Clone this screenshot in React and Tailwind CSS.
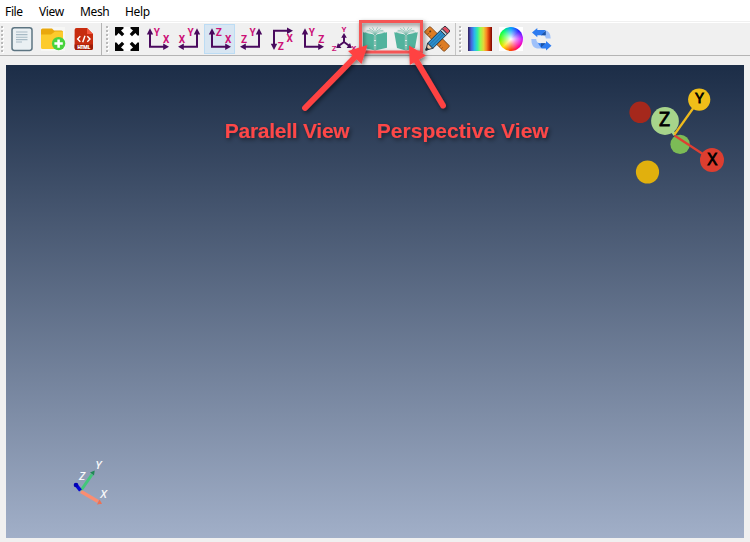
import React from 'react';

const PURPLE = '#4a0a5e';
const PINK = '#cc1177';

function Icon({ children }) {
  return <svg className="block h-6 w-6 overflow-visible" viewBox="0 0 24 24">{children}</svg>;
}

function ToolButton({ active, children }) {
  return (
    <div className={`flex h-[30px] w-[31px] items-center justify-center border ${active ? 'border-[#bcdcf4] bg-[#d8e6f2]' : 'border-transparent'}`}>
      {children}
    </div>
  );
}

function Handle() {
  return (
    <div className="flex w-[3px] flex-col gap-[2px]">
      {Array.from({ length: 7 }, (_, i) => (
        <div key={i} className="h-[2px] w-[2px] bg-[#b9b9b9] shadow-[1px_1px_0_#ffffff]" />
      ))}
    </div>
  );
}

function Letter({ x, y, size = 10, children }) {
  return (
    <text x={x} y={y} textAnchor="middle" fontFamily="Roboto, 'Open Sans', sans-serif" fontWeight="700" fontSize={size} fill={PINK}>
      {children}
    </text>
  );
}

// Two-axis view icon: corner on the left, on the right, or at the top.
function AxisIcon({ corner, a, b }) {
  if (corner === 'top') {
    return (
      <Icon>
        <path d="M4 18V3.7H18" fill="none" stroke={PURPLE} strokeWidth="2" />
        <path d="M.8 16.8H7.2L4 23ZM17 .5V6.9L23 3.7Z" fill={PURPLE} />
        <Letter x="19.7" y="15">{a}</Letter>
        <Letter x="10.8" y="23">{b}</Letter>
      </Icon>
    );
  }
  const right = corner === 'right';
  return (
    <Icon>
      <g transform={right ? 'translate(24 0) scale(-1 1)' : undefined}>
        <path d="M4 6V19.7H18" fill="none" stroke={PURPLE} strokeWidth="2" />
        <path d="M.8 7.4H7.2L4 1.3ZM17.2 16.5V22.9L23 19.7Z" fill={PURPLE} />
      </g>
      <Letter x={right ? 13.7 : 10.8} y="8.8">{a}</Letter>
      <Letter x={right ? 5 : 20.2} y="15.6">{b}</Letter>
    </Icon>
  );
}

function IsoIcon() {
  return (
    <Icon>
      <path d="M12 9V15L6.5 19M12 15L17.5 19" fill="none" stroke={PURPLE} strokeWidth="2" />
      <path d="M9.2 10.8H14.8L12 6ZM4.2 21L6 16L9.4 20.9ZM19.8 21L18 16L14.6 20.9Z" fill={PURPLE} />
      <Letter x="12" y="5.4" size={8}>Y</Letter>
      <Letter x="2.2" y="24" size={8}>Z</Letter>
      <Letter x="21.8" y="24" size={8}>X</Letter>
    </Icon>
  );
}

function DocumentIcon() {
  return (
    <Icon>
      <rect x="2" y=".7" width="20" height="22.8" rx="2.4" fill="#eaf0f3" stroke="#5d7582" strokeWidth="1.5" />
      <path d="M6 5H17.5M6 7.6H17.5M6 10.2H17.5M6 12.6H17.5M6 15H12" stroke="#a7bac5" strokeWidth="1.1" />
    </Icon>
  );
}

function FolderIcon() {
  return (
    <Icon>
      <rect width="24" height="24" fill="#f7f7f5" />
      <path d="M0 3Q0 1.5 1.5 1.5H11L13 3.5H20.5Q22 3.5 22 5V19H0Z" fill="#e9a80e" />
      <path d="M0 7.5H10L14 4.5H22V20.5Q22 22 20.5 22H1.5Q0 22 0 20.5Z" fill="#fccb2d" />
      <circle cx="17.6" cy="16.6" r="6.7" fill="#49d33e" />
      <path d="M17.6 12.4V20.8M13.4 16.6H21.8" stroke="#fff" strokeWidth="2.5" />
    </Icon>
  );
}

function HtmlIcon() {
  return (
    <Icon>
      <path d="M4.5 1H15L21 7V21Q21 23 19 23H4.5Q2.6 23 2.6 21V3Q2.6 1 4.5 1Z" fill="#c72c0f" />
      <path d="M15 1V7H21Z" fill="#f3543a" />
      <path d="M2.6 17.5H21V21Q21 23 19 23H4.5Q2.6 23 2.6 21Z" fill="#9f1c08" />
      <path d="M8.3 9.2L5.6 12L8.3 14.8M15.3 9.2L18 12L15.3 14.8M13 8.7L10.7 15.3" fill="none" stroke="#fff" strokeWidth="1.4" />
      <text x="11.8" y="22.1" textAnchor="middle" fontFamily="'Open Sans', sans-serif" fontWeight="800" fontSize="5" fill="#fff" textLength="13">HTML</text>
    </Icon>
  );
}

function ExpandIcon() {
  return (
    <Icon>
      <rect width="24" height="24" fill="#fff" />
      {[0, 90, 180, 270].map((r) => (
        <g key={r} transform={`rotate(${r} 12 12)`}>
          <path d="M0 0H8.5V1.5L6 3.6L9.3 7L7 9.3L3.6 6L1.5 8.5H0Z" fill="#050505" />
        </g>
      ))}
    </Icon>
  );
}

function BookIcon({ perspective }) {
  return (
    <Icon>
      <path d="M2 5.5Q8.5 3.2 11.8 8M22 5.5Q15.5 3.2 12.2 8M3.6 3.4Q9.6 2.8 11.9 8M20.4 3.4Q14.4 2.8 12.1 8M6 1.4Q11 3 12 8M18 1.4Q13 3 12 8M9.4 .4Q11.6 3 12 8M14.6 .4Q12.4 3 12 8" fill="none" stroke="#6db5a5" strokeWidth=".6" />
      <path
        d={perspective ? 'M.2 5.2L9.8 7.2L12 8.8L14.2 7.2L23.8 5.2L21 21L14 23L12 23.6L10 23L3 21Z' : 'M0 5.2L9.8 7.2L12 8.8L14.2 7.2L24 5.2V20.8L14 23L12 23.6L10 23L0 20.8Z'}
        fill="#51b39d"
      />
      <path d="M12 8.8V23.2" stroke="#d6ebe5" strokeWidth="2.2" />
      <path d="M12 8.8V23.2" stroke="#4a9a87" strokeWidth="1.1" strokeDasharray="4.2 .9" />
    </Icon>
  );
}

function PencilRulerIcon() {
  return (
    <Icon>
      <g transform="rotate(45 12 12)">
        <rect x="-2" y="8" width="28" height="8" rx="1" fill="#dd7d25" stroke="#7d4a20" strokeWidth=".8" />
        <path d="M2 16V13M5 16V14M19 16V13M22 16V14" stroke="#8d4d1a" strokeWidth=".9" />
        <circle cx="1.8" cy="11.4" r="1" fill="#623817" />
      </g>
      <g transform="rotate(-45 12 12)" stroke="#27323d" strokeWidth=".9">
        <path d="M-3.8 12L2.5 8.3V15.7Z" fill="#efd0ac" />
        <path d="M2.5 8.3H20.5V15.7H2.5Z" fill="#2d8ecb" />
        <path d="M3 10.8H20.5M3 13.2H20.5" stroke="#1b689c" strokeWidth=".7" />
        <path d="M20.5 8.3H23V15.7H20.5Z" fill="#b9cad4" />
        <path d="M23 8.3H25.5Q27 8.3 27 9.8V14.2Q27 15.7 25.5 15.7H23Z" fill="#df4d60" />
        <path d="M-3.8 12L-1.2 10.5V13.5Z" fill="#222b34" />
      </g>
    </Icon>
  );
}

function SyncIcon() {
  return (
    <Icon>
      <path d="M11 3H14.5Q20.7 4 20.7 11.6H15.8Q15.8 8.3 11 8.3Z" fill="#9fc1fa" />
      <path d="M2 5.6L7.3 1V3H15.5L12 8.3H7.3V10.2Z" fill="#2e7cf0" />
      <path d="M11 8.3L15.8 3.4V8.3Z" fill="#1d54a6" />
      <path d="M1.3 12H6.2Q6.2 16.2 11 16.2V21.4H7Q1.3 20.5 1.3 12Z" fill="#9fc1fa" />
      <path d="M21.5 18.8L16 14V16.2H8L11.5 21.4H16V23.4Z" fill="#2e7cf0" />
      <path d="M11 16.2H15.5L11 20.6Z" fill="#1d54a6" />
    </Icon>
  );
}

function Annotations() {
  return (
    <svg className="pointer-events-none absolute left-0 top-0" width="750" height="542" viewBox="0 0 750 542">
      <defs>
        <filter id="shadow" x="-20%" y="-20%" width="150%" height="150%">
          <feDropShadow dx="1.5" dy="2" stdDeviation="2" floodColor="#000" floodOpacity=".5" />
        </filter>
      </defs>
      <g filter="url(#shadow)">
        <rect x="360.5" y="21.5" width="61" height="30.5" fill="none" stroke="#f55555" strokeWidth="3" />
      </g>
      <g filter="url(#shadow)" fill="#ff4343" stroke="#ff4343">
        <path d="M305 108L356 56" strokeWidth="5.8" strokeLinecap="round" />
        <path d="M367.5 45L361.5 64L348 51Z" stroke="none" />
        <path d="M443 105.5L416 60" strokeWidth="5.8" strokeLinecap="round" />
        <path d="M409 45.5L426 55.5L409.8 65Z" stroke="none" />
      </g>
      <g filter="url(#shadow)" fill="#ff4747" fontFamily="'Liberation Sans', Arial, sans-serif" fontWeight="700" fontSize="21">
        <text x="224.7" y="138" textLength="125">Paralell View</text>
        <text x="376.7" y="138" textLength="172">Perspective View</text>
      </g>
    </svg>
  );
}

function OrientationWidget() {
  return (
    <svg className="absolute right-0 top-0" width="124" height="129" viewBox="620 65 124 129">
      <circle cx="640.2" cy="112.3" r="10.8" fill="#a5281c" />
      <circle cx="647.5" cy="172" r="11.6" fill="#e1b00d" />
      <circle cx="680.1" cy="144.4" r="9.7" fill="#7cbb56" />
      <path d="M675 135L667 124" stroke="#a5d58a" strokeWidth="3" />
      <path d="M674.5 134.5L699 100" stroke="#efbb1c" strokeWidth="2.2" />
      <path d="M674.5 135.5L712 160" stroke="#df3f31" strokeWidth="2.2" />
      <circle cx="665" cy="121" r="13.9" fill="#a7d48b" />
      <circle cx="699.2" cy="99.6" r="11.1" fill="#f0be19" />
      <circle cx="712" cy="160" r="12" fill="#dd3e30" />
      <g fontFamily="'Noto Sans', 'Open Sans', sans-serif" textAnchor="middle" fill="#000" stroke="#000" strokeWidth=".8">
        <text x="664.7" y="125.8" fontSize="19.5">Z</text>
        <text x="699.5" y="102.8" fontSize="15">Y</text>
        <text x="712.3" y="165" fontSize="16.5">X</text>
      </g>
    </svg>
  );
}

function AxesMarker() {
  return (
    <svg className="absolute bottom-[23px] left-[54px]" width="60" height="65" viewBox="60 450 60 65">
      <path d="M81 490.5L92 474.5" stroke="#43c77b" strokeWidth="3" />
      <path d="M90 472.5L94.7 470.5L94 475.5Z" fill="#218855" />
      <path d="M81 491.5L98 501.5" stroke="#fb8d71" strokeWidth="3.4" />
      <path d="M97 504.5L102 503.8L99.5 499.5Z" fill="#f16f50" />
      <path d="M80.5 490.5L75.8 484.5" stroke="#0505d4" strokeWidth="3.6" />
      <circle cx="76" cy="485" r="2.3" fill="#0000b5" />
      <g fontFamily="'Noto Sans', 'Open Sans', sans-serif" fontStyle="italic" fontSize="11.5" fill="#fff" stroke="#fff" strokeWidth=".2">
        <text x="95.5" y="468.7">Y</text>
        <text x="79" y="480">Z</text>
        <text x="100.5" y="498">X</text>
      </g>
    </svg>
  );
}

export default function App() {
  return (
    <div className="relative flex h-[542px] w-[750px] flex-col overflow-hidden bg-[#f0f0f0]">
      <nav className="flex h-[21px] shrink-0 items-center bg-white pl-[5px] pt-[3px] font-['Noto_Sans','Open_Sans',sans-serif] text-[12px] leading-[18px] tracking-[-0.35px] text-black">
        <span className="w-[34px]">File</span>
        <span className="w-[41px]">View</span>
        <span className="w-[45px]">Mesh</span>
        <span>Help</span>
      </nav>
      <div className="mt-px h-px shrink-0 bg-white" />
      <div className="flex h-[33px] shrink-0 items-center border-b border-[#b4b4b4]">
        <div className="flex h-full w-[102px] items-center border-r border-[#b4b4b4] pl-px">
          <Handle />
          <div className="ml-[2px] flex">
            <ToolButton><DocumentIcon /></ToolButton>
            <ToolButton><FolderIcon /></ToolButton>
            <ToolButton><HtmlIcon /></ToolButton>
          </div>
        </div>
        <div className="flex h-full w-[354px] items-center border-r border-[#c4c4c4] pl-1">
          <Handle />
          <div className="ml-[2px] flex">
            <ToolButton><ExpandIcon /></ToolButton>
            <ToolButton><AxisIcon corner="left" a="Y" b="X" /></ToolButton>
            <ToolButton><AxisIcon corner="right" a="Y" b="X" /></ToolButton>
            <ToolButton active><AxisIcon corner="left" a="Z" b="X" /></ToolButton>
            <ToolButton><AxisIcon corner="right" a="Y" b="Z" /></ToolButton>
            <ToolButton><AxisIcon corner="top" a="X" b="Z" /></ToolButton>
            <ToolButton><AxisIcon corner="left" a="Y" b="Z" /></ToolButton>
            <ToolButton><IsoIcon /></ToolButton>
            <ToolButton><BookIcon /></ToolButton>
            <ToolButton><BookIcon perspective /></ToolButton>
            <ToolButton><PencilRulerIcon /></ToolButton>
          </div>
        </div>
        <div className="flex items-center pl-[3px]">
          <Handle />
          <div className="ml-[2px] flex">
            <ToolButton>
              <div className="h-6 w-6 bg-[linear-gradient(to_right,#31205c,#4664dc_14%,#2ab6ed_27%,#34eca3_40%,#9cf94b_52%,#e5d538_65%,#fb8824_77%,#d53a08_88%,#7b0403)]" />
            </ToolButton>
            <ToolButton>
              <div className="flex h-6 w-6 items-center justify-center bg-white">
                <div className="h-6 w-6 rounded-full bg-[radial-gradient(circle,white_0%,rgba(255,255,255,0.5)_30%,transparent_65%),conic-gradient(from_0deg,#00a0ff,#3020ff_45deg,#d020ff_90deg,#ff0090_135deg,#ff4000_180deg,#ffe000_225deg,#60ff00_270deg,#00ff60_315deg,#00a0ff)]" />
              </div>
            </ToolButton>
            <ToolButton><SyncIcon /></ToolButton>
          </div>
        </div>
      </div>
      <main className="relative mx-[6px] mb-1 mt-[9px] flex-1 bg-[linear-gradient(to_bottom,#1c2d47,#a1afc8)]">
        <OrientationWidget />
        <AxesMarker />
      </main>
      <Annotations />
    </div>
  );
}
